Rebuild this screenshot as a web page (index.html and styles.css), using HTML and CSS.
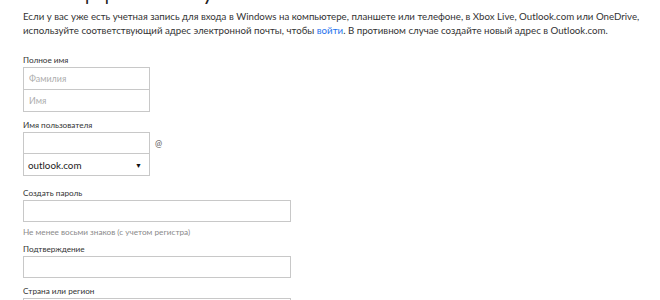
FILE: index.html
```html
<!DOCTYPE html>
<html lang="ru">
<head>
    <meta charset="UTF-8">
    <title>Создание учетной записи</title>
    <link rel="stylesheet" href="styles.css">
</head>
<body>
    <div class="page">
        <h1 class="title">Создание учетной записи</h1>
        <p class="intro">Если у вас уже есть учетная запись для входа в Windows на компьютере, планшете или телефоне, в Xbox Live, Outlook.com или OneDrive,<br>
            используйте соответствующий адрес электронной почты, чтобы <a href="javascript:void(0)">войти</a>. В противном случае создайте новый адрес в Outlook.com.</p>

        <div class="field name">
            <div class="label">Полное имя</div>
            <div class="stack">
                <input class="box short" type="text" placeholder="Фамилия">
                <input class="box short" type="text" placeholder="Имя">
            </div>
        </div>

        <div class="field user">
            <div class="label">Имя пользователя</div>
            <div class="user-row">
                <input class="box short" type="text">
                <span class="at">@</span>
            </div>
            <div class="box short select">
                <span>outlook.com</span>
                <span class="arrow">▼</span>
            </div>
        </div>

        <div class="field password">
            <div class="label">Создать пароль</div>
            <input class="box long" type="password">
            <div class="hint">Не менее восьми знаков (с учетом регистра)</div>
        </div>

        <div class="field confirm">
            <div class="label">Подтверждение</div>
            <input class="box long" type="password">
        </div>

        <div class="field country">
            <div class="label">Страна или регион</div>
            <div class="box long"></div>
        </div>
    </div>
</body>
</html>
```

FILE: styles.css
```css
* {
    margin: 0;
    padding: 0;
    box-sizing: border-box;
}

html, body {
    width: 100%;
    height: 100%;
    background-color: #fff;
    overflow: hidden;
}

body {
    font-family: Lato, "Open Sans", sans-serif;
    color: #333;
}

.page {
    padding-left: 23px;
}

.title {
    font-size: 38px;
    font-weight: 300;
    line-height: 40px;
    color: #222;
    margin-top: -38px;
    white-space: nowrap;
}

.intro {
    font-size: 9.7px;
    line-height: 13.5px;
    margin-top: 8px;
    white-space: nowrap;
    color: #333;
}

.intro a {
    color: #2672ec;
    text-decoration: none;
}

.label {
    font-size: 8.2px;
    line-height: 10px;
    color: #333;
    margin-bottom: 2px;
}

.field.name {
    margin-top: 18px;
}

.field.user {
    margin-top: 8px;
}

.field.password {
    margin-top: 12px;
}

.field.confirm {
    margin-top: 7px;
}

.field.country {
    margin-top: 8px;
}

.stack {
    display: flex;
    flex-direction: column;
}

.stack .box {
    height: 23px;
}

.stack .box + .box {
    margin-top: -1px;
}

.box {
    display: block;
    height: 22px;
    border: 1px solid #c8c8c8;
    background: #fff;
    font-family: inherit;
    font-size: 8.9px;
    padding: 0 5px;
    color: #333;
    outline: none;
}

.box::placeholder {
    color: #adadad;
}

.short {
    width: 127px;
}

.long {
    width: 268px;
}

.user-row {
    display: flex;
    align-items: center;
    gap: 5px;
}

.at {
    font-size: 8.5px;
    color: #555;
    padding-top: 2px;
}

.select {
    margin-top: -1px;
    height: 23px;
    display: flex;
    align-items: center;
    justify-content: space-between;
    padding: 0 7px 0 4px;
    font-size: 9.8px;
    color: #222;
}

.arrow {
    font-size: 7px;
    color: #111;
}

.hint {
    font-size: 8.2px;
    line-height: 10px;
    color: #8a8a8a;
    margin-top: 5px;
}
```
